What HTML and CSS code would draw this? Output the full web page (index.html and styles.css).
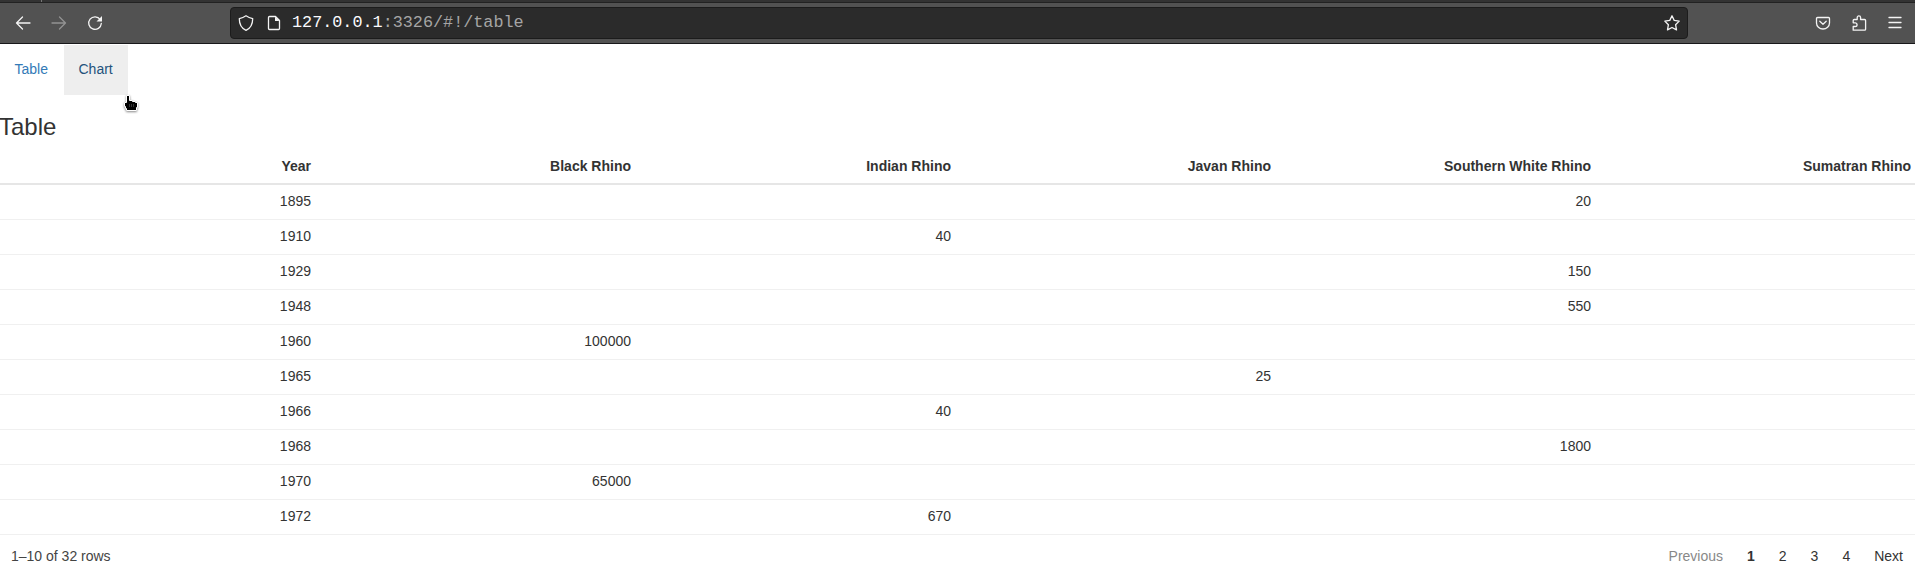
FILE: index.html
```html
<!DOCTYPE html>
<html lang="en">
<head>
<meta charset="utf-8">
<title>Rhinos</title>
<link rel="stylesheet" href="styles.css">
</head>
<body>
<header class="browser">
  <div class="tabstrip"><span class="tabedge"></span></div>
  <div class="toolbar">
    <svg class="icon back" viewBox="0 0 16 16"><path d="M15 8H1.5M7.500 2L1.500 8l6 6"/></svg>
    <svg class="icon forward" viewBox="0 0 16 16"><path d="M1 8h13.500M8.500 2l6 6-6 6"/></svg>
    <svg class="icon reload" viewBox="0 0 16 16"><path d="M13.200 4.500A6.300 6.300 0 1 0 14.300 8.500"/><path class="solid" d="M15 1v5.500H9.500z"/></svg>
    <div class="urlbar">
      <svg class="icon shield" viewBox="0 0 16 16"><path d="M8 .8C10 2.200 12.500 3.200 14.700 3.700C14.700 9 13 13 8 15.300 3 13 1.300 9 1.300 3.700C3.500 3.200 6 2.200 8 .8z"/></svg>
      <svg class="icon page" viewBox="0 0 16 16"><path d="M3.500 1.500h6l4 4v8a1 1 0 0 1-1 1h-9a1 1 0 0 1-1-1v-11a1 1 0 0 1 1-1z"/><path class="solid" d="M9 1.500v4.500h4.500z"/></svg>
      <span class="url"><b class="host">127.0.0.1</b>:3326/#!/table</span>
      <svg class="icon star" viewBox="0 0 16 16"><path d="M8 .8l2.200 4.600 5 .7-3.600 3.600.9 5.200L8 12.500l-4.500 2.400.9-5.200L.8 6.100l5-.7z"/></svg>
    </div>
    <div class="actions">
      <svg class="icon" viewBox="0 0 16 16"><path d="M2.500 2.500h11a1 1 0 0 1 1 1V8a6.500 6 0 0 1-13 0V3.500a1 1 0 0 1 1-1zM4.800 6.300L8 9.300l3.200-3"/></svg>
      <svg class="icon puzzle" viewBox="0 0 16 16"><path d="M2.200 15.200V11.500h2a1.800 1.800 0 0 0 0-3.700h-2V5.500a1 1 0 0 1 1-1h3V2.600a1.700 1.700 0 0 1 3.400 0v1.900h4a1 1 0 0 1 1 1v8.700a1 1 0 0 1-1 1z"/></svg>
      <svg class="icon" viewBox="0 0 16 16"><path d="M2 2.500h12M2 7.500h12M2 12.500h12"/></svg>
    </div>
  </div>
</header>
<nav class="nav">
  <a class="nav-link">Table</a>
  <a class="nav-link hovered">Chart</a>
  <svg class="cursor" viewBox="0 0 16 17"><path d="M3.500.500h3V5.500h3v1h3v1h2v5h-1v3h-10v-2h-1v-2h-1v-4h2z"/><path class="knuckles" d="M6.500 9v3M8.500 9v3M10.500 9v3"/></svg>
</nav>
<main>
  <h3 class="title">Table</h3>
  <table class="grid">
    <thead><tr><th>Year</th><th>Black Rhino</th><th>Indian Rhino</th><th>Javan Rhino</th><th>Southern White Rhino</th><th>Sumatran Rhino</th></tr></thead>
    <tbody>
      <tr><td>1895</td><td></td><td></td><td></td><td>20</td><td></td></tr>
      <tr><td>1910</td><td></td><td>40</td><td></td><td></td><td></td></tr>
      <tr><td>1929</td><td></td><td></td><td></td><td>150</td><td></td></tr>
      <tr><td>1948</td><td></td><td></td><td></td><td>550</td><td></td></tr>
      <tr><td>1960</td><td>100000</td><td></td><td></td><td></td><td></td></tr>
      <tr><td>1965</td><td></td><td></td><td>25</td><td></td><td></td></tr>
      <tr><td>1966</td><td></td><td>40</td><td></td><td></td><td></td></tr>
      <tr><td>1968</td><td></td><td></td><td></td><td>1800</td><td></td></tr>
      <tr><td>1970</td><td>65000</td><td></td><td></td><td></td><td></td></tr>
      <tr><td>1972</td><td></td><td>670</td><td></td><td></td><td></td></tr>
    </tbody>
  </table>
  <footer class="pager">
    <span class="info">1–10 of 32 rows</span>
    <div class="pages">
      <span class="page-btn disabled">Previous</span>
      <span class="page-btn current">1</span>
      <span class="page-btn">2</span>
      <span class="page-btn">3</span>
      <span class="page-btn">4</span>
      <span class="page-btn">Next</span>
    </div>
  </footer>
</main>
</body>
</html>
```
FILE: styles.css
```css
* { box-sizing: border-box; }
body {
  margin: 0;
  height: 584px;
  overflow: hidden;
  background: #fff;
  color: #333;
  font: 14px/20px "Liberation Sans", Arial, sans-serif;
}
.browser { height: 44px; background: #525252; border-bottom: 1px solid #18181a; }
.tabstrip { height: 3px; background: #333; border-bottom: 1px solid #222; }
.tabedge { display: block; width: 1px; height: 2px; margin-left: 41px; background: #777; }
.toolbar { height: 40px; display: flex; align-items: center; padding: 0 12px 0 15px; }
.icon {
  width: 16px; height: 16px; flex: none;
  fill: none; stroke: #f4f4f4; stroke-width: 1.3;
  stroke-linecap: round; stroke-linejoin: round;
}
.icon .solid { fill: #f4f4f4; stroke: none; }
.icon.forward { margin-left: 20px; stroke: #929292; }
.reload { margin-left: 20px; }
.urlbar {
  display: flex; align-items: center;
  width: 1458px; height: 32px; margin-left: 127px; padding: 0 7px;
  background: #2b2b2b; border: 1px solid #1c1c1c; border-radius: 4px;
}
.page { margin-left: 12px; }
.url { margin-left: 10px; flex: 1; color: #a5a5a5; font: 16.8px/20px "Liberation Mono", monospace; white-space: pre; }
.host { font-weight: 400; color: #fbfbfe; }
.actions { display: flex; gap: 20px; margin-left: auto; }
.nav { position: relative; display: flex; height: 50px; margin-top: 1px; }
.nav-link { width: 64px; padding: 14px 0 16px 14.500px; color: #337ab7; }
.hovered { background: #eee; color: #23527c; }
.cursor { position: absolute; left: 123px; top: 50px; width: 16px; height: 17px; fill: #000; stroke: #fff; filter: drop-shadow(0 1px 1px #888); }
.knuckles { stroke: #555; stroke-width: .6; }
.title { margin: 19px 0 9px -1px; font-weight: 400; font-size: 24px; line-height: 26px; }
.grid { width: 1920px; margin-left: -1px; table-layout: fixed; border-collapse: separate; border-spacing: 0; text-align: right; }
th { height: 36px; padding: 7px 8px; border-bottom: 2px solid #e6e6e6; }
td { height: 35px; padding: 6px 8px 8px; border-bottom: 1px solid #f0f0f0; }
.pager { display: flex; justify-content: space-between; padding: 11px 0 0 11px; }
.info { color: #444; }
.pages { display: flex; }
.page-btn { padding: 0 12px; }
.disabled { color: #888; }
.current { font-weight: 700; }
```
